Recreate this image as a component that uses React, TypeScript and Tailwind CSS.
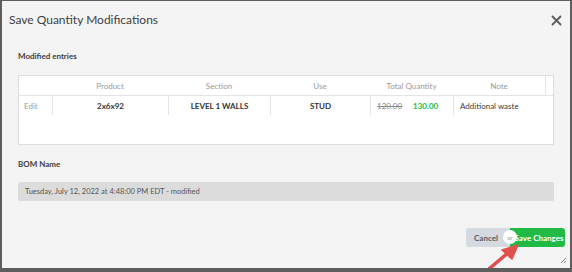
export default function App() {
  const cols = 'grid grid-cols-[33px_116px_102px_100px_83px_93px_1fr]';
  return (
    <div className="w-[572px] h-[272px] border-l-2 border-r-2 border-t border-b-4 border-[#5e5e5e] font-['Lato','Liberation_Sans',sans-serif] overflow-hidden">
      <div className="relative flex h-full flex-col bg-[#f4f4f4]">
        <div className="flex h-[38px] items-center justify-between pl-[7px] pr-[8px]">
          <h1 className="text-[12px] leading-none text-[#404040]">Save Quantity Modifications</h1>
          <svg width="11" height="11" viewBox="0 0 11 11" className="mt-[1px]">
            <path d="M1.5 1.5L9.5 9.5M9.5 1.5L1.5 9.5" stroke="#5a5a5a" strokeWidth="1.8" strokeLinecap="round" />
          </svg>
        </div>

        <div className="px-4">
          <p className="mt-[11px] text-[8px] font-bold leading-[12px] text-[#3c3c3c]">Modified entries</p>

          <div className="mt-[13px] h-[70px] border border-[#dedede] bg-white">
            <div className={`${cols} h-[20px] items-center border-b border-[#e4e4e4] text-[8px] text-[#9a9a9a]`}>
              <div />
              <div className="text-center">Product</div>
              <div className="text-center">Section</div>
              <div className="text-center">Use</div>
              <div className="text-center">Total Quantity</div>
              <div className="flex h-full items-center justify-center border-r border-[#e4e4e4]">Note</div>
              <div />
            </div>
            <div className={`${cols} h-[19px] text-[8px] text-[#333]`}>
              <div className="flex items-center pl-[5px] text-[#9a9a9a]">Edit</div>
              <div className="flex items-center justify-center border-l border-[#e4e4e4] font-bold">2x6x92</div>
              <div className="flex items-center justify-center border-l border-[#e4e4e4] font-bold">LEVEL 1 WALLS</div>
              <div className="flex items-center justify-center border-l border-[#e4e4e4] font-bold">STUD</div>
              <div className="flex items-center gap-[11px] border-l border-[#e4e4e4] pl-[6px]">
                <span className="text-[#8a8a8a] line-through">120.00</span>
                <span className="font-bold text-[#21ba45]">130.00</span>
              </div>
              <div className="flex items-center border-l border-[#e4e4e4] pl-[6px] text-[#3a3a3a]">Additional waste</div>
              <div />
            </div>
          </div>

          <p className="mt-[13px] text-[8px] font-bold leading-[12px] text-[#3c3c3c]">BOM Name</p>
          <div className="mt-[12px] flex h-[19px] items-center rounded-[2px] bg-[#dcdcdc] pl-[7px] text-[7.5px] text-[#555]">
            Tuesday, July 12, 2022 at 4:48:00 PM EDT - modified
          </div>
        </div>

        <div className="mt-[27px] flex justify-end pr-[5px]">
          <div className="relative flex h-[19px] text-[8px] font-bold">
            <button className="w-[44px] whitespace-nowrap rounded-l-[3px] bg-[#d4dae0] pr-[4px] text-[#5a5a5a]">Cancel</button>
            <button className="w-[55px] whitespace-nowrap rounded-r-[3px] bg-[#21ba45] pl-[3px] text-white">Save Changes</button>
            <span className="absolute left-[37px] top-[2px] flex h-[14px] w-[14px] items-center justify-center rounded-full bg-white text-[6px] font-normal text-[#999]">
              or
            </span>
          </div>
        </div>

        <svg width="8" height="8" viewBox="0 0 8 8" className="absolute bottom-[4px] right-[3px]">
          <path d="M7 2L2 7M7 5L5 7" stroke="#8a8a8a" strokeWidth="1" />
        </svg>

        <svg width="572" height="272" viewBox="0 0 572 272" className="pointer-events-none absolute left-[-2px] top-[-1px]">
          <path d="M483 274L509 252" stroke="#e0504f" strokeWidth="3.5" strokeLinecap="round" />
          <path d="M518 245L502 250L512 259Z" fill="#e0504f" stroke="#e0504f" strokeWidth="1.5" strokeLinejoin="round" />
        </svg>
      </div>
    </div>
  );
}
